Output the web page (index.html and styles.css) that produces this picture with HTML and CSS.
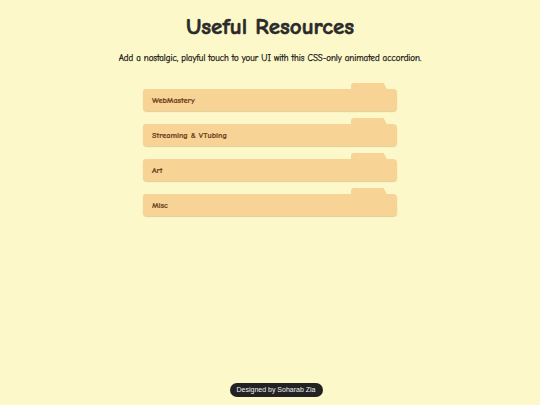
FILE: index.html
```html
<!DOCTYPE html>
<html>
<head>
    <meta charset="utf-8">
    <title>Useful Resources</title>
    <link rel="stylesheet" href="styles.css">
</head>
<body>
    <div class="page">
        <h1 class="title">Useful Resources</h1>
        <p class="intro">Add a nostalgic, playful touch to your UI with this CSS-only animated accordion.</p>

        <!--folders-->
        <div class="folders">
            <div class="folder"><span class="label">WebMastery</span></div>
            <div class="folder"><span class="label">Streaming &amp; VTubing</span></div>
            <div class="folder"><span class="label">Art</span></div>
            <div class="folder"><span class="label">Misc</span></div>
        </div>
    </div>
    <div class="credit">Designed by Soharab Zia</div>
</body>
</html>
```

FILE: styles.css
```css
html, body{
    height:100%;
}
body{
    margin:0;
    background-color:#fcf8c9;
    font-family:"Comic Sans MS", "Comic Neue", cursive;
    color:#222;
    display:flex;
    flex-direction:column;
}
.page{
    flex:1;
    display:flex;
    flex-direction:column;
    align-items:center;
}
.title{
    margin:12px 0 0 0;
    font-size:23px;
    line-height:30px;
    font-weight:900;
    color:#2a2a2a;
    -webkit-text-stroke:0.6px #2a2a2a;
}
.intro{
    margin:9px 0 0 0;
    font-size:8.9px;
    line-height:14px;
    color:#111;
    -webkit-text-stroke:0.25px #111;
}
.folders{
    margin-top:19px;
    width:254px;
    display:flex;
    flex-direction:column;
    gap:8px;
}
/*folder body + tab*/
.folder{
    position:relative;
    margin-top:5px;
    height:22px;
    background-color:#f7d495;
    border-radius:3px 4px 4px 4px;
    box-shadow:0 1px 1px rgba(170,130,60,0.35);
    display:flex;
    align-items:center;
    padding-left:9px;
}
.folder::before{
    content:"";
    position:absolute;
    top:-6px;
    right:9px;
    width:37px;
    height:8px;
    background-color:#f7d495;
    border-radius:3px 2px 0 0;
    clip-path:polygon(0 0, 88% 0, 100% 100%, 0 100%);
}
.label{
    font-size:8.2px;
    font-weight:bold;
    color:#6e3f1c;
    -webkit-text-stroke:0.2px #6e3f1c;
}
.credit{
    align-self:center;
    margin:0 0 8px 12px;
    background-color:#222;
    color:#f2f2f2;
    font-family:"Liberation Sans", Arial, sans-serif;
    font-size:7px;
    line-height:14px;
    padding:0 7px;
    border-radius:8px;
}
```
